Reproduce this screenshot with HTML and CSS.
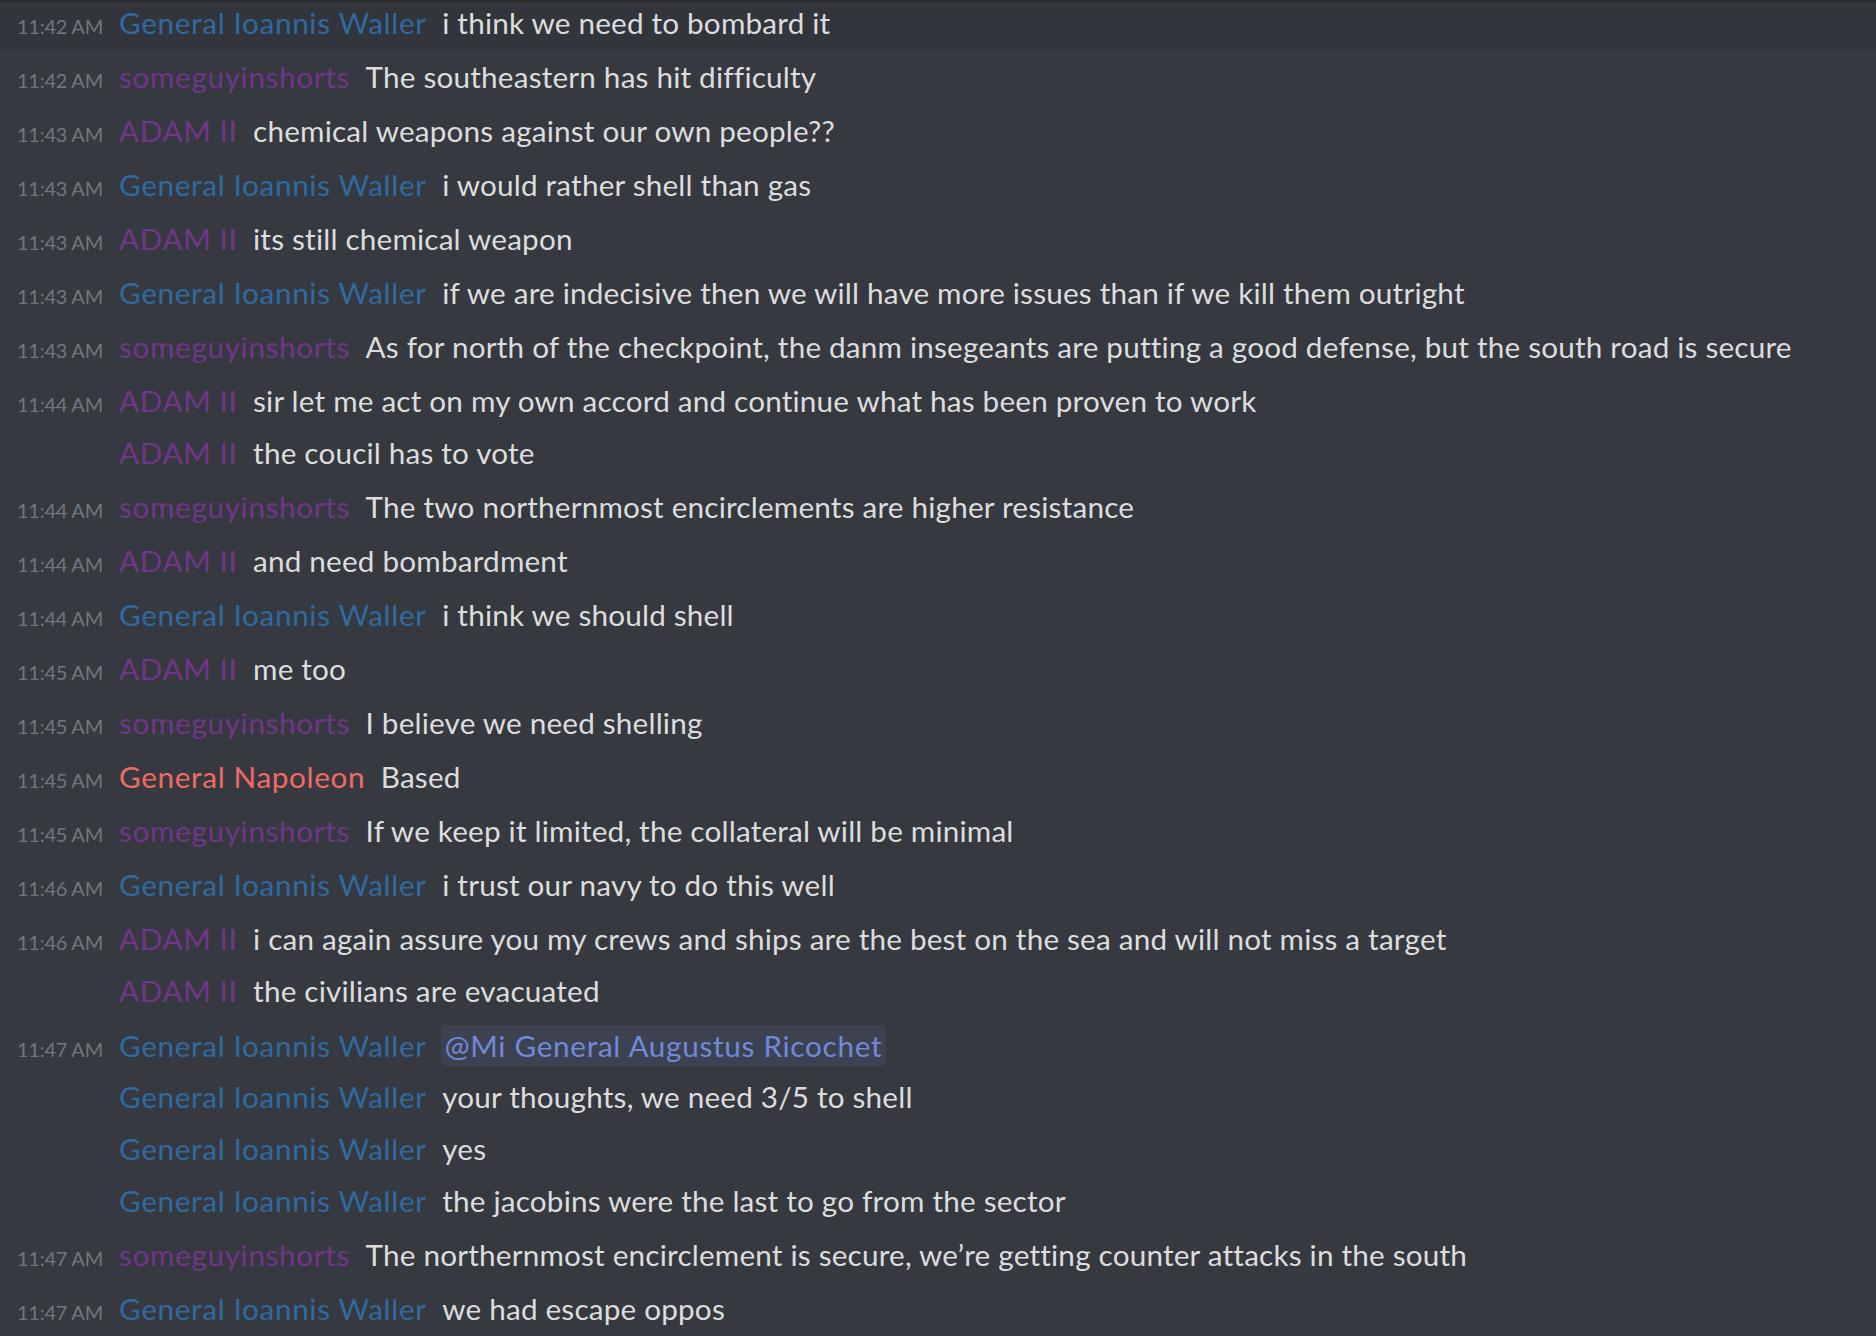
FILE: index.html
```html
<!DOCTYPE html>
<html lang="en">
<head>
<meta charset="utf-8">
<title>Chat</title>
<link rel="stylesheet" href="styles.css">
</head>
<body>
<div class="chat">
  <div class="msg start hover"><span class="ts">11:42 AM</span><span class="name blue">General Ioannis Waller</span><span class="text">i think we need to bombard it</span></div>
  <div class="msg start"><span class="ts">11:42 AM</span><span class="name purple">someguyinshorts</span><span class="text">The southeastern has hit difficulty</span></div>
  <div class="msg start"><span class="ts">11:43 AM</span><span class="name purple">ADAM II</span><span class="text">chemical weapons against our own people??</span></div>
  <div class="msg start"><span class="ts">11:43 AM</span><span class="name blue">General Ioannis Waller</span><span class="text">i would rather shell than gas</span></div>
  <div class="msg start"><span class="ts">11:43 AM</span><span class="name purple">ADAM II</span><span class="text">its still chemical weapon</span></div>
  <div class="msg start"><span class="ts">11:43 AM</span><span class="name blue">General Ioannis Waller</span><span class="text">if we are indecisive then we will have more issues than if we kill them outright</span></div>
  <div class="msg start"><span class="ts">11:43 AM</span><span class="name purple">someguyinshorts</span><span class="text">As for north of the checkpoint, the danm insegeants are putting a good defense, but the south road is secure</span></div>
  <div class="msg start"><span class="ts">11:44 AM</span><span class="name purple">ADAM II</span><span class="text">sir let me act on my own accord and continue what has been proven to work</span></div>
  <div class="msg"><span class="ts"></span><span class="name purple">ADAM II</span><span class="text">the coucil has to vote</span></div>
  <div class="msg start"><span class="ts">11:44 AM</span><span class="name purple">someguyinshorts</span><span class="text">The two northernmost encirclements are higher resistance</span></div>
  <div class="msg start"><span class="ts">11:44 AM</span><span class="name purple">ADAM II</span><span class="text">and need bombardment</span></div>
  <div class="msg start"><span class="ts">11:44 AM</span><span class="name blue">General Ioannis Waller</span><span class="text">i think we should shell</span></div>
  <div class="msg start"><span class="ts">11:45 AM</span><span class="name purple">ADAM II</span><span class="text">me too</span></div>
  <div class="msg start"><span class="ts">11:45 AM</span><span class="name purple">someguyinshorts</span><span class="text">I believe we need shelling</span></div>
  <div class="msg start"><span class="ts">11:45 AM</span><span class="name salmon">General Napoleon</span><span class="text">Based</span></div>
  <div class="msg start"><span class="ts">11:45 AM</span><span class="name purple">someguyinshorts</span><span class="text">If we keep it limited, the collateral will be minimal</span></div>
  <div class="msg start"><span class="ts">11:46 AM</span><span class="name blue">General Ioannis Waller</span><span class="text">i trust our navy to do this well</span></div>
  <div class="msg start"><span class="ts">11:46 AM</span><span class="name purple">ADAM II</span><span class="text">i can again assure you my crews and ships are the best on the sea and will not miss a target</span></div>
  <div class="msg"><span class="ts"></span><span class="name purple">ADAM II</span><span class="text">the civilians are evacuated</span></div>
  <div class="msg start"><span class="ts">11:47 AM</span><span class="name blue">General Ioannis Waller</span><span class="text"><span class="mention">@Mi General Augustus Ricochet</span></span></div>
  <div class="msg"><span class="ts"></span><span class="name blue">General Ioannis Waller</span><span class="text">your thoughts, we need 3/5 to shell</span></div>
  <div class="msg"><span class="ts"></span><span class="name blue">General Ioannis Waller</span><span class="text">yes</span></div>
  <div class="msg"><span class="ts"></span><span class="name blue">General Ioannis Waller</span><span class="text">the jacobins were the last to go from the sector</span></div>
  <div class="msg start"><span class="ts">11:47 AM</span><span class="name purple">someguyinshorts</span><span class="text">The northernmost encirclement is secure, we’re getting counter attacks in the south</span></div>
  <div class="msg start"><span class="ts">11:47 AM</span><span class="name blue">General Ioannis Waller</span><span class="text">we had escape oppos</span></div>
</div>
</body>
</html>
```
FILE: styles.css
```css
html, body {
  margin: 0;
  padding: 0;
  background: #36393f;
  height: 100%;
  overflow: hidden;
}
body {
  font-family: Lato, "Open Sans", sans-serif;
  color: #dcddde;
}
.chat {
  border-top: 2px solid #2b2d31;
  box-shadow: inset 0 1px 0 #303237;
  padding-top: 1px;
}
.msg {
  display: block;
  white-space: nowrap;
  font-size: 29.7px;
  line-height: 39px;
  height: 39px;
  padding-bottom: 12.85px;
  padding-left: 17px;
}
.msg.start { margin-top: 2.2px; }
.msg.start:first-child { margin-top: 0; }
.msg.hover {
  background: linear-gradient(#32353b 0, #32353b 47px, transparent 47px);
}
.ts {
  display: inline-block;
  width: 102px;
  font-size: 20px;
  letter-spacing: -0.25px;
  color: #72767d;
}
.name {
  letter-spacing: 0.65px;
  margin-right: 15.5px;
}
.blue { color: #2f6aa1; }
.purple { color: #71368a; }
.salmon { color: #f06b63; }
.text {
  color: #dcddde;
  letter-spacing: 0.19px;
}
.mention {
  display: inline-block;
  line-height: 41px;
  padding: 0 4px;
  margin-left: -1.5px;
  border-radius: 5px;
  background: #3d4251;
  color: #7289da;
  letter-spacing: 0.7px;
}
```
